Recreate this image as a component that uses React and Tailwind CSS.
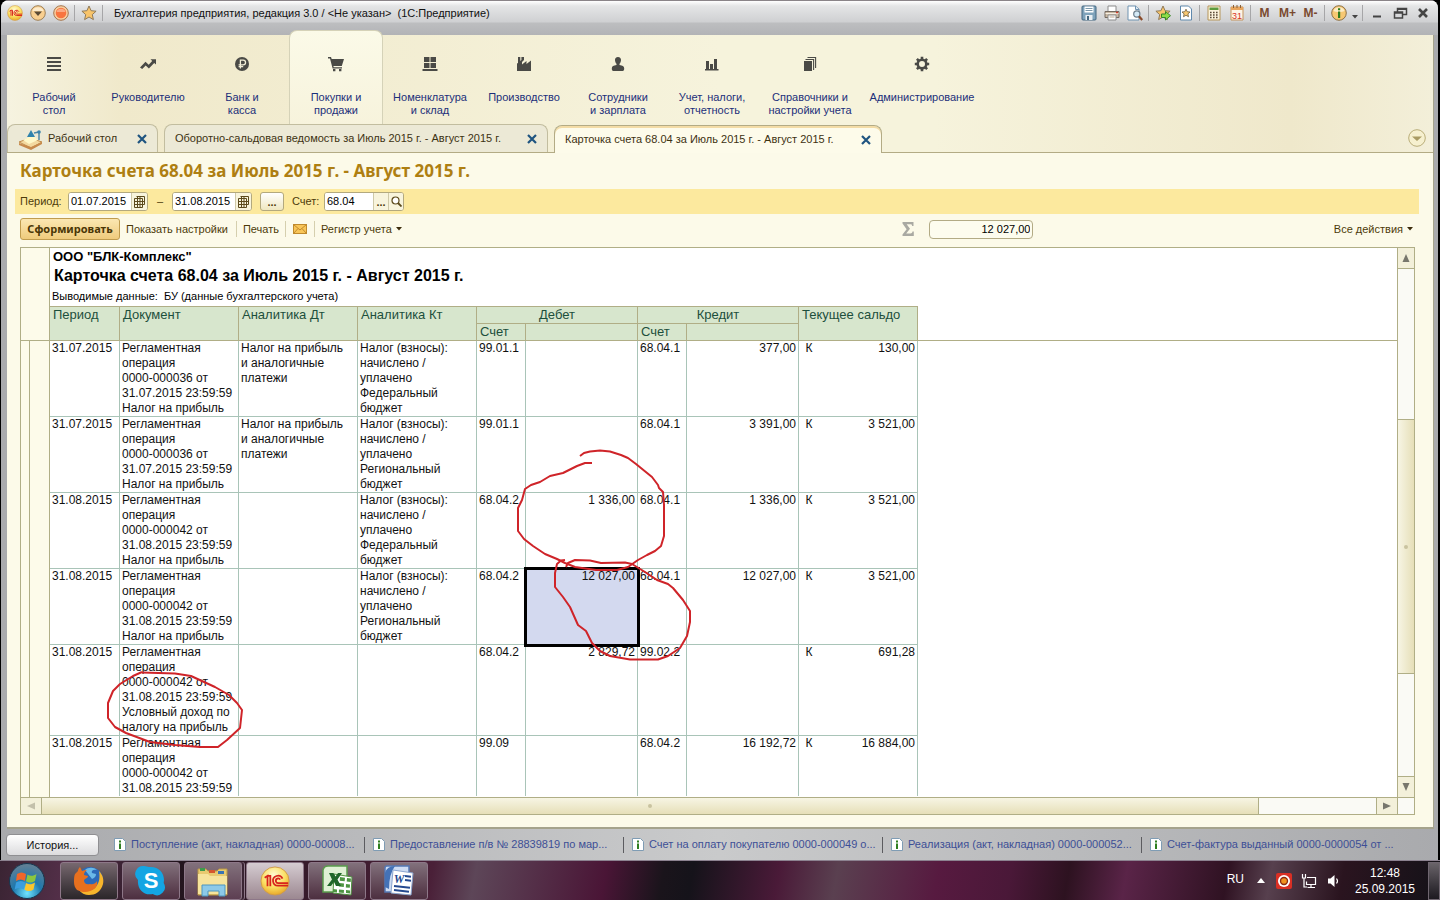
import React, { useState } from 'react';

const sections = [
  { icon: 'desk', lines: ['Рабочий', 'стол'], width: 'w-[94px]' },
  { icon: 'trend', lines: ['Руководителю'], width: 'w-[94px]' },
  { icon: 'ruble', lines: ['Банк и', 'касса'], width: 'w-[94px]' },
  { icon: 'cart', lines: ['Покупки и', 'продажи'], width: 'w-[94px]', active: true },
  { icon: 'stock', lines: ['Номенклатура', 'и склад'], width: 'w-[94px]' },
  { icon: 'factory', lines: ['Производство'], width: 'w-[94px]' },
  { icon: 'person', lines: ['Сотрудники', 'и зарплата'], width: 'w-[94px]' },
  { icon: 'bars', lines: ['Учет, налоги,', 'отчетность'], width: 'w-[94px]' },
  { icon: 'books', lines: ['Справочники и', 'настройки учета'], width: 'w-[102px]' },
  { icon: 'gear', lines: ['Администрирование'], width: 'w-[122px]' },
];

const debitTax = ['Налог на прибыль', 'и аналогичные', 'платежи'];
const federal = ['Налог (взносы):', 'начислено /', 'уплачено', 'Федеральный', 'бюджет'];
const regional = ['Налог (взносы):', 'начислено /', 'уплачено', 'Региональный', 'бюджет'];
const docJuly = ['Регламентная', 'операция', '0000-000036 от', '31.07.2015 23:59:59', 'Налог на прибыль'];
const docAugust = ['Регламентная', 'операция', '0000-000042 от', '31.08.2015 23:59:59'];

const rows = [
  { date: '31.07.2015', doc: docJuly, dt: debitTax, kt: federal, dAcc: '99.01.1', dSum: '', kAcc: '68.04.1', kSum: '377,00', rest: '130,00' },
  { date: '31.07.2015', doc: docJuly, dt: debitTax, kt: regional, dAcc: '99.01.1', dSum: '', kAcc: '68.04.1', kSum: '3 391,00', rest: '3 521,00' },
  { date: '31.08.2015', doc: [...docAugust, 'Налог на прибыль'], dt: [], kt: federal, dAcc: '68.04.2', dSum: '1 336,00', kAcc: '68.04.1', kSum: '1 336,00', rest: '3 521,00' },
  { date: '31.08.2015', doc: [...docAugust, 'Налог на прибыль'], dt: [], kt: regional, dAcc: '68.04.2', dSum: '12 027,00', kAcc: '68.04.1', kSum: '12 027,00', rest: '3 521,00' },
  { date: '31.08.2015', doc: [...docAugust, 'Условный доход по', 'налогу на прибыль'], dt: [], kt: [], dAcc: '68.04.2', dSum: '2 829,72', kAcc: '99.02.2', kSum: '', rest: '691,28' },
  { date: '31.08.2015', doc: docAugust, dt: [], kt: [], dAcc: '99.09', dSum: '', kAcc: '68.04.2', kSum: '16 192,72', rest: '16 884,00' },
];

const historyItems = [
  'Поступление (акт, накладная) 0000-00008...',
  'Предоставление п/в № 28839819 по мар...',
  'Счет на оплату покупателю 0000-000049 о...',
  'Реализация (акт, накладная) 0000-000052...',
  'Счет-фактура выданный 0000-0000054 от ...',
];

const SectionIcon = ({ name }) => (
  <svg width="16" height="16" viewBox="0 0 16 16" fill="#4a4a46" aria-hidden="true">
    {name === 'desk' && <path d="M1 1h14v2H1zM1 5h14v2H1zM1 9h14v2H1zM1 13h14v2H1z" />}
    {name === 'trend' && (
      <path d="M0 11.5 5.5 5.8l3.2 3L12.2 5 10.5 3.2H16v5.4l-1.8-1.7-5.3 5.6-3.2-3L2.2 13z" />
    )}
    {name === 'ruble' && (
      <>
        <circle cx="8" cy="8" r="7" />
        <path d="M6.4 12.5V4.2h2.8a2.3 2.3 0 0 1 0 4.7H4.6M4.6 10.7h4.6" fill="none" stroke="#f3efd8" strokeWidth="1.3" />
      </>
    )}
    {name === 'cart' && (
      <path d="M0 1h3l.7 2H16l-2.2 7H5.4l.3 1.2H14v1.3H4.6L2 2.4H0zM5 13h2.4v2.2H5zM11 13h2.4v2.2H11z" />
    )}
    {name === 'stock' && <path d="M2 1h5.5v5H2zM8.5 1H14v5H8.5zM2 7h5.500v5H2zM8.5 7H14v5H8.5zM.5 13h15v2H.5z" />}
    {name === 'factory' && <path d="M1 15V8l.5-1H2V1h2.300v4L5.400 4V1H8v3L6 6v2.500L10.500 5v3L15 4.500V15z" />}
    {name === 'person' && (
      <path d="M8 1c2 0 3.200 1.300 3 3.300-.1 1.600-.7 2.800-1.500 3.500v1.200c3 .4 4.700 1.300 4.700 3.300 0 1.700-.4 2.700-1.500 2.700H3.300c-1.100 0-1.500-1-1.500-2.700 0-2 1.700-2.900 4.700-3.300V7.800C5.700 7.100 5.100 5.900 5 4.300 4.800 2.300 6 1 8 1z" />
    )}
    {name === 'bars' && <path d="M2 5h3v8h1V8h3v5h1V3h3v10h1.500v1.500H1V13h1z" />}
    {name === 'books' && (
      <>
        <path d="M2 5h8v10H2z" />
        <path d="M3.500 3.500H11.600V14M5.500 1.500H13.600V12" fill="none" stroke="#4a4a46" strokeWidth="1.100" />
      </>
    )}
    {name === 'gear' && (
      <>
        <circle cx="8" cy="8" r="4.300" fill="none" stroke="#4a4a46" strokeWidth="2.600" />
        <path d="M8 .8v2.800M8 12.400v2.800M.8 8h2.800M12.400 8h2.800M2.900 2.900l2 2M11.100 11.100l2 2M13.100 2.900l-2 2M4.900 11.100l-2 2" stroke="#4a4a46" strokeWidth="2.600" />
      </>
    )}
  </svg>
);

const Caret = ({ color = '#3c2c0c' }) => (
  <svg width="6" height="4" viewBox="0 0 6 4" aria-hidden="true">
    <path d="M0 0h6L3 3.500z" fill={color} />
  </svg>
);

const CloseIcon = () => (
  <svg width="10" height="10" viewBox="0 0 10 10" aria-hidden="true">
    <path d="M1 1l8 8M9 1l-8 8" stroke="#1f5480" strokeWidth="2.200" />
  </svg>
);

const OneCIcon = ({ size }) => (
  <svg width={size} height={size} viewBox="0 0 32 32" aria-hidden="true">
    <defs>
      <radialGradient id="oneC" cx="45%" cy="30%" r="70%">
        <stop offset="0" stopColor="#fffbd6" />
        <stop offset="0.600" stopColor="#fbdf62" />
        <stop offset="1" stopColor="#e9a92a" />
      </radialGradient>
    </defs>
    <circle cx="16" cy="16" r="15" fill="url(#oneC)" stroke="#cf9a4a" />
    <path d="M5 12.500 8 10.500v11M11 21.500v-11h-3M24 13.500a5.300 5.300 0 1 0-4.500 7.500H30M21.500 14.500a2.500 2.500 0 1 0-2 3.800H30" fill="none" stroke="#d8231c" strokeWidth="1.900" />
  </svg>
);

const StarShape = ({ fill = '#f8c46a', stroke = '#8f7a58' }) => (
  <path d="M8 1l2.100 4.700 5 .5-3.800 3.400 1.100 5L8 12l-4.400 2.600 1.100-5L.9 6.200l5-.5z" fill={fill} stroke={stroke} strokeLinejoin="round" />
);

const ToolIcon = ({ name }) => (
  <svg width="16" height="16" viewBox="0 0 16 16" aria-hidden="true">
    {name === 'save' && (
      <>
        <rect x="1" y="1" width="14" height="14" rx="1" fill="#7fa3bb" stroke="#436780" />
        <path d="M3.500 1.500h9v6h-9z" fill="#fff" />
        <path d="M4.500 3.500h7M4.500 5.500h7" stroke="#7b98aa" />
        <path d="M4.500 10h7v5h-7z" fill="#e9eff3" />
        <path d="M6 11h2v4H6z" fill="#44687f" />
      </>
    )}
    {name === 'print' && (
      <>
        <path d="M4 1h8v6H4z" fill="#fff" stroke="#8c8c8c" />
        <path d="M1 6.500h14v6H1z" fill="#c9b9a4" stroke="#756a60" />
        <path d="M1.500 8.500h13" stroke="#f6efe4" />
        <path d="M4 10h8v5H4z" fill="#fff" stroke="#8c8c8c" />
        <path d="M5.500 12h5" stroke="#b9a58e" />
        <path d="M12 7.500h2" stroke="#d13b2b" strokeWidth="1.500" />
      </>
    )}
    {name === 'preview' && (
      <>
        <path d="M1 1h7.500L12 4v11H1z" fill="#fff" stroke="#6f93b1" />
        <path d="M8.500 1v3.500H12" fill="#dbe8f2" stroke="#6f93b1" />
        <circle cx="9.800" cy="9" r="3.100" fill="#d4e9f6" stroke="#6d7f8d" strokeWidth="1.200" />
        <path d="M12 11.300l3.200 3.700" stroke="#8a4a2a" strokeWidth="2.200" />
      </>
    )}
    {name === 'star' && <StarShape />}
    {name === 'starAdd' && (
      <>
        <StarShape />
        <path d="M6.500 9h4V6.500l5 4.200-5 4.300v-2.500h-4z" fill="#8fdc46" stroke="#37852a" />
      </>
    )}
    {name === 'starDoc' && (
      <>
        <path d="M2.500 1h8l3 3v11h-11z" fill="#fff" stroke="#5f89ad" />
        <path d="M8 4.200l1.200 2.500 2.800.3-2.100 1.900.6 2.800L8 10.300l-2.500 1.400.6-2.800L4 7l2.800-.3z" fill="#f8c872" stroke="#6d5c3c" strokeWidth=".8" />
      </>
    )}
    {name === 'calc' && (
      <>
        <path d="M2 1h12v14H2z" fill="#fbf3dc" stroke="#b5955b" />
        <path d="M3.500 2.500h9v2.500h-9z" fill="#5d9b3c" />
        <path d="M4 7.500h8M4 10h8M4 12.500h8" stroke="#5a4a36" strokeWidth="1.400" strokeDasharray="1.600 1.400" />
      </>
    )}
    {name === 'calendar' && (
      <>
        <path d="M2 2h12v13H2z" fill="#fdf5e6" stroke="#c5935d" />
        <path d="M2 2h12v3H2z" fill="#e9a55c" />
        <path d="M4.500 0v3M8 0v3M11.500 0v3" stroke="#8a6036" />
        <text x="8" y="13.500" fontSize="9" textAnchor="middle" fill="#d9341d" fontFamily="Liberation Sans, sans-serif">31</text>
      </>
    )}
    {name === 'info' && (
      <>
        <circle cx="8" cy="8" r="7.300" fill="#f7c873" stroke="#8e7248" />
        <path d="M2.500 6a5.700 5 0 0 1 11 0c-3 1.500-8 1.500-11 0z" fill="#fdecc6" />
        <path d="M7 6.500h2.200V13H7zM7 3.300h2.200v2H7z" fill="#2f7c1c" />
      </>
    )}
    {name === 'minimize' && <path d="M4 10.500h8v2H4z" fill="#444" />}
    {name === 'restore' && (
      <path d="M5.500 7V3.500h9v6H11M2.500 7h8v6h-8zM2.500 8h8M5.500 4.300h9" fill="none" stroke="#444" strokeWidth="1.500" />
    )}
    {name === 'close' && <path d="M4 4l8 8M12 4l-8 8" stroke="#444" strokeWidth="2.600" />}
  </svg>
);

const ToolButton = ({ name, label }) => (
  <button type="button" aria-label={label} className="w-[23px] h-5 flex items-center justify-center">
    <ToolIcon name={name} />
  </button>
);

const BarLine = () => <span className="w-px h-4 mx-[2px] bg-[#a6a6a8]"></span>;

const TitleBar = () => (
  <header className="h-[35px] border-t border-[#8a8488] pl-[2px] pr-1 bg-[linear-gradient(to_bottom,#ffffff_0,#e4e5e6_5px,#cfd0d2_21px,#bdbec0_22px,#b2b3b6_34px)]">
    <div className="flex items-center h-6 text-[11px] text-[#111]">
      <button type="button" aria-label="Меню" className="w-[23px] h-5 flex items-center justify-center">
        <OneCIcon size={16} />
      </button>
      <button type="button" aria-label="Список" className="w-[23px] h-5 flex items-center justify-center">
        <svg width="16" height="16" viewBox="0 0 16 16" aria-hidden="true">
          <circle cx="8" cy="8" r="7.300" fill="#f9cf90" stroke="#9e8058" />
          <path d="M2.500 6a5.700 5 0 0 1 11 0z" fill="#fdebcb" />
          <path d="M4 6.500h8L8 11z" fill="#5b4a35" />
        </svg>
      </button>
      <button type="button" aria-label="Запись" className="w-[23px] h-5 flex items-center justify-center">
        <svg width="16" height="16" viewBox="0 0 16 16" aria-hidden="true">
          <circle cx="8" cy="8" r="7.300" fill="#f9cfa0" stroke="#a5754d" />
          <circle cx="8" cy="8" r="5.300" fill="#f8743f" />
          <path d="M3.500 7a4.600 4.200 0 0 1 9 0z" fill="#fba983" />
        </svg>
      </button>
      <BarLine />
      <ToolButton name="star" label="Избранное" />
      <BarLine />
      <h1 className="ml-[9px] whitespace-pre truncate">Бухгалтерия предприятия, редакция 3.0 / &lt;Не указан&gt;  (1С:Предприятие)</h1>
      <div className="ml-auto flex items-center">
        <ToolButton name="save" label="Сохранить" />
        <ToolButton name="print" label="Печать документа" />
        <ToolButton name="preview" label="Просмотр" />
        <BarLine />
        <ToolButton name="starAdd" label="Добавить в избранное" />
        <ToolButton name="starDoc" label="Ссылки" />
        <BarLine />
        <ToolButton name="calc" label="Калькулятор" />
        <ToolButton name="calendar" label="Календарь" />
        <BarLine />
        <button type="button" className="w-[23px] text-xs font-bold text-[#7a4a30]">M</button>
        <button type="button" className="w-[23px] text-xs font-bold text-[#7a4a30]">M+</button>
        <button type="button" className="w-[23px] text-xs font-bold text-[#7a4a30]">M-</button>
        <BarLine />
        <ToolButton name="info" label="Справка" />
        <button type="button" aria-label="Еще" className="w-[10px] h-5 flex items-end justify-center pb-1">
          <Caret color="#444" />
        </button>
        <BarLine />
        <ToolButton name="minimize" label="Свернуть" />
        <ToolButton name="restore" label="Развернуть" />
        <ToolButton name="close" label="Закрыть" />
      </div>
    </div>
  </header>
);

const SectionNav = () => (
  <nav className="flex h-[95px] -mt-[5px]">
    {sections.map((s) => (
      <a
        key={s.icon}
        href="#"
        className={`${s.width} flex flex-col items-center pt-[25px] text-[11px] leading-[13px] text-[#1c2f7a] text-center ${
          s.active ? 'rounded-t-lg border-t border-x border-[#d5d2b8] bg-linear-to-b from-[#fbfae8] to-[#f7f3dc]' : 'border-t border-transparent'
        }`}
      >
        <SectionIcon name={s.icon} />
        <span className="mt-[19px] whitespace-nowrap">
          {s.lines.map((line) => (
            <span key={line} className="block">{line}</span>
          ))}
        </span>
      </a>
    ))}
  </nav>
);

const PageTabs = () => (
  <div className="flex items-end gap-[6px] border-b border-[#b3ab85] h-7">
    <div className="flex items-center w-[151px] h-7 pl-[10px] pr-[10px] rounded-t-lg border border-b-0 border-[#c2bd9f] bg-[#ece9d6]">
      <svg width="26" height="22" viewBox="0 0 26 22" aria-hidden="true">
        <path d="M1 14l11-4 12 4-11 6z" fill="#f3d9a0" stroke="#c08b4b" />
        <path d="M1 15v2l12 5 11-6v-2l-11 5z" fill="#c78a4c" />
        <path d="M5 12l10-5 5 5-9 4z" fill="#fff8c8" />
        <path d="M13 2l4 7h-8z" fill="#2f83ad" />
        <path d="M16 5l5-1v8" fill="none" stroke="#4c87a5" strokeWidth="1.500" />
        <circle cx="21" cy="4" r="1.800" fill="#3b85ad" />
      </svg>
      <button type="button" className="ml-1 text-[11px] text-[#3d3212]">Рабочий стол</button>
      <button type="button" aria-label="Закрыть вкладку" className="ml-auto"><CloseIcon /></button>
    </div>
    <div className="flex items-center w-[384px] h-7 px-[10px] rounded-t-lg border border-b-0 border-[#c2bd9f] bg-[#ece9d6]">
      <button type="button" className="whitespace-nowrap text-[11px] text-[#3d3212]">
        Оборотно-сальдовая ведомость за Июль 2015 г. - Август 2015 г.
      </button>
      <button type="button" aria-label="Закрыть вкладку" className="ml-auto"><CloseIcon /></button>
    </div>
    <div className="flex items-center w-[328px] h-7 -mb-px px-[10px] rounded-t-lg border border-b-0 border-[#b3ab85] bg-[#fdfbea] shadow-[inset_0_2px_0_#f3dca6]">
      <button type="button" className="whitespace-nowrap text-[11px] text-[#3d3212]">
        Карточка счета 68.04 за Июль 2015 г. - Август 2015 г.
      </button>
      <button type="button" aria-label="Закрыть вкладку" className="ml-auto"><CloseIcon /></button>
    </div>
    <button type="button" aria-label="Список вкладок" className="ml-auto mr-[7px] mb-[5px]">
      <svg width="18" height="18" viewBox="0 0 18 18" aria-hidden="true">
        <circle cx="9" cy="9" r="8.300" fill="#f6f0cf" stroke="#b9ad78" />
        <path d="M4 7.500h10L9 12z" fill="#a99b63" />
      </svg>
    </button>
  </div>
);

const CalendarGlyph = () => (
  <svg width="11" height="12" viewBox="0 0 11 12" aria-hidden="true">
    <path d="M2.500.5h8v8h-2M.5 2.500h8v9h-8zM.5 5.500h10M.5 8.500h8M3.500.5v11M6 .5v11" fill="none" stroke="#5c4a1c" />
  </svg>
);

const DateField = ({ label, value }) => (
  <span className="flex w-[80px] h-[19px] rounded-[3px] border border-[#b3a97e] bg-white overflow-hidden">
    <input aria-label={label} defaultValue={value} className="min-w-0 flex-1 pl-[2px] text-[11px] text-black bg-white" />
    <button type="button" aria-label="Выбрать дату" className="w-4 flex items-center justify-center border-l border-[#cfc9a8] bg-[#f8f4dc]">
      <CalendarGlyph />
    </button>
  </span>
);

const ToolLine = () => <span className="w-px h-4 mx-[6px] bg-[#d5cfae]"></span>;

const Filters = () => (
  <form className="ml-2 mr-[14px] h-[25px] pl-[5px] flex items-center bg-[#fce99e] text-[11px] text-[#4d3b0a]" onSubmit={(e) => e.preventDefault()}>
    <span className="w-12">Период:</span>
    <DateField label="Начало периода" value="01.07.2015" />
    <span className="w-6 text-center">–</span>
    <DateField label="Конец периода" value="31.08.2015" />
    <button type="button" className="ml-2 w-6 h-[19px] rounded-[3px] border border-[#b3a97e] bg-linear-to-b from-white to-[#efe7c0] font-bold leading-4">...</button>
    <label htmlFor="account" className="ml-2 w-8">Счет:</label>
    <span className="flex w-[80px] h-[19px] rounded-[3px] border border-[#b3a97e] bg-white overflow-hidden">
      <input id="account" defaultValue="68.04" className="min-w-0 flex-1 pl-[2px] text-[11px] text-black bg-white" />
      <button type="button" className="w-[15px] border-l border-[#cfc9a8] bg-[#f8f4dc] font-bold leading-4">...</button>
      <button type="button" aria-label="Открыть счет" className="w-[15px] flex items-center justify-center border-l border-[#cfc9a8] bg-[#f8f4dc]">
        <svg width="11" height="11" viewBox="0 0 11 11" aria-hidden="true">
          <circle cx="4.500" cy="4.500" r="3.500" fill="#fff" stroke="#5c4a1c" strokeWidth="1.200" />
          <path d="M7 7l3.500 3.500" stroke="#5c4a1c" strokeWidth="1.800" />
        </svg>
      </button>
    </span>
  </form>
);

const Toolbar = () => (
  <div className="mt-1 ml-[13px] mr-5 h-[22px] flex items-center text-[11px] text-[#4d3b0a] whitespace-nowrap">
    <button type="button" className="w-[100px] h-[22px] rounded-[3px] border border-[#c09c4e] bg-linear-to-b from-[#fbe7b2] to-[#efcb7c] font-['Noto_Sans',sans-serif] text-[11px] leading-5 font-bold text-[#4a3606]">
      Сформировать
    </button>
    <button type="button" className="ml-[6px] mr-[2px]">Показать настройки</button>
    <ToolLine />
    <button type="button">Печать</button>
    <ToolLine />
    <button type="button" aria-label="Отправить по почте" className="px-px">
      <svg width="14" height="10" viewBox="0 0 14 10" aria-hidden="true">
        <rect x=".5" y=".5" width="13" height="9" fill="#f9c659" stroke="#c08a2c" />
        <path d="M.5.5L7 6l6.500-5.500M.5 9.500L5 4.500M13.500 9.500L9 4.500" fill="none" stroke="#c08a2c" />
      </svg>
    </button>
    <ToolLine />
    <button type="button" className="flex items-center gap-1">Регистр учета <Caret /></button>
    <span className="flex-[5]"></span>
    <svg width="12" height="14" viewBox="0 0 12 14" aria-hidden="true">
      <path d="M.5 0h11v4h-1.300c-.2-1.300-.7-1.700-2-1.700H4.700L8 6.700l-3.800 4.700h4.300c1.200 0 1.700-.5 2-1.900h1.300V14H.5v-1.600L4.600 7.200.5 1.600z" fill="#a9a9a2" />
    </svg>
    <input aria-label="Сумма" readOnly value="12 027,00" className="ml-[15px] w-[104px] h-[19px] rounded-[4px] border border-[#b3ab85] bg-[#fdfcee] pr-[2px] text-right text-[11px] text-black" />
    <span className="flex-[3]"></span>
    <button type="button" className="flex items-center gap-1">Все действия <Caret /></button>
  </div>
);

const head = 'bg-[#d7e6cd] border-r border-b border-[#b0ae86] px-[3px] align-top font-normal text-left';
const cell = 'border-r border-b border-[#a9c4b8] px-[2px] align-top';

const Lines = ({ items }) => items.map((line) => <div key={line} className="whitespace-nowrap">{line}</div>);

const ReportTable = () => {
  const [selected, setSelected] = useState(3);

  return (
    <table className="w-full table-fixed border-separate border-spacing-0 text-xs leading-[15px] text-[#111]">
      <colgroup>
        <col className="w-[70px]" />
        <col className="w-[119px]" />
        <col className="w-[119px]" />
        <col className="w-[119px]" />
        <col className="w-[49px]" />
        <col className="w-[112px]" />
        <col className="w-[49px]" />
        <col className="w-[112px]" />
        <col className="w-[20px]" />
        <col className="w-[99px]" />
        <col />
      </colgroup>
      <thead className="text-[13px] leading-4 text-[#1d4f3c]">
        <tr>
          <th rowSpan="2" className={`${head} border-t`}>Период</th>
          <th rowSpan="2" className={`${head} border-t`}>Документ</th>
          <th rowSpan="2" className={`${head} border-t`}>Аналитика Дт</th>
          <th rowSpan="2" className={`${head} border-t`}>Аналитика Кт</th>
          <th colSpan="2" className={`${head} border-t`}><div className="text-center">Дебет</div></th>
          <th colSpan="2" className={`${head} border-t`}><div className="text-center">Кредит</div></th>
          <th colSpan="2" rowSpan="2" className={`${head} border-t whitespace-nowrap`}>Текущее сальдо</th>
          <td rowSpan="2" className="border-b border-[#b0ae86]"></td>
        </tr>
        <tr>
          <th className={head}>Счет</th>
          <th className={head}></th>
          <th className={head}>Счет</th>
          <th className={head}></th>
        </tr>
      </thead>
      <tbody>
        {rows.map((row, idx) => (
          <tr key={idx} className="last:[&>td]:border-b-0">
            <td className={cell}>{row.date}</td>
            <td className={cell}><Lines items={row.doc} /></td>
            <td className={cell}><Lines items={row.dt} /></td>
            <td className={cell}><Lines items={row.kt} /></td>
            <td className={cell}>{row.dAcc}</td>
            <td
              className={`${cell} text-right ${selected === idx ? 'bg-[#d3d9ef] outline-3 -outline-offset-1 outline-black' : ''}`}
              onClick={() => setSelected(idx)}
            >
              {row.dSum}
            </td>
            <td className={cell}>{row.kAcc}</td>
            <td className={`${cell} text-right`}>{row.kSum}</td>
            <td className="border-b border-[#a9c4b8] align-top text-center">К</td>
            <td className={`${cell} text-right`}>{row.rest}</td>
            <td></td>
          </tr>
        ))}
      </tbody>
    </table>
  );
};

// Red pen marks drawn over the sheet
const PenMarks = () => (
  <svg className="absolute left-0 top-0 pointer-events-none" width="1348" height="549" viewBox="50 248 1348 549" fill="none" stroke="#cf2429" strokeWidth="2" strokeLinejoin="round" aria-hidden="true">
    <path d="M580 456L584 453L590 451.500L600 450.500L610 451.500L621 455L628 458L636 464L652 477L658 485L659 488L663 492L664 505V536L661 546L655 551L647 555L638 560L628 567L617 570H596L575 567L565 563L557 559L545 554L533 546L524 539L518 531V508L522 500L525 489L531 485L540 482L550 476L563 473L577 466L585 463H592" />
    <path d="M565 560L561 560.500L557 564L555 573V587L563 597L570 607L574 616L578 625L586 631L592 643L600 651L610 656L630 659.500H658L668 656L680 648L687 636L690 622V611L683 600L673 588L668 584L657 580L645 572L632 564L625 562.500L601 563L590 560.500L575 560L568 563L566 567" />
    <path d="M142 672L133 676L120 684L113 691L108 703V718L115 727L126 733L150 742L175 745L200 747H218L227 740L240 728L242 710L237 703L229 695L215 687L191 676L175 673.500L142 672.500" />
  </svg>
);

const ScrollArrow = ({ d, dim }) => (
  <svg width="8" height="8" viewBox="0 0 8 8" aria-hidden="true">
    <path d={d} fill={dim ? '#c3c0ab' : '#77766c'} />
  </svg>
);

const Sheet = () => (
  <div className="mt-[7px] ml-[13px] mr-[18px] mb-3 flex-1 min-h-0 flex flex-col border border-[#b0ae86] bg-white font-['Liberation_Sans',Arial,sans-serif]">
    <div className="flex flex-1 min-h-0">
      <div className="w-[29px] shrink-0 flex flex-col border-r border-[#b0ae86] bg-[#fdfbea]">
        <div className="h-[93px] border-b border-[#b0ae86]"></div>
        <div className="flex-1 w-[9px] border-r border-[#b0ae86]"></div>
      </div>
      <div className="relative flex-1 min-w-0 overflow-hidden">
        <div className="h-[58px] text-black whitespace-nowrap">
          <p className="pl-[3px] text-[13px] leading-[17px] font-bold">ООО "БЛК-Комплекс"</p>
          <p className="pl-1 text-base leading-[21px] font-bold">Карточка счета 68.04 за Июль 2015 г. - Август 2015 г.</p>
          <p className="pl-[2px] text-[11px] leading-5 whitespace-pre">Выводимые данные:  БУ (данные бухгалтерского учета)</p>
        </div>
        <ReportTable />
        <PenMarks />
      </div>
      <div className="w-[17px] shrink-0 flex flex-col border-l border-[#b0ae86] bg-[#fafaf5]">
        <button type="button" aria-label="Вверх" className="h-[21px] flex items-center justify-center border-b border-[#b0ae86] bg-[#f3f0da]">
          <ScrollArrow d="M4 0l3.500 8h-7z" />
        </button>
        <div className="flex-[151]"></div>
        <div className="flex-[254] flex items-center justify-center border-y border-[#b0ae86] bg-linear-to-r from-[#f7f5e4] to-[#e6dfb8]">
          <span className="w-1 h-1 rounded-full bg-[#c9c3a0]"></span>
        </div>
        <div className="flex-[102]"></div>
        <button type="button" aria-label="Вниз" className="h-[21px] flex items-center justify-center border-t border-[#b0ae86] bg-[#f3f0da]">
          <ScrollArrow d="M4 8l3.500-8h-7z" />
        </button>
      </div>
    </div>
    <div className="h-[17px] flex border-t border-[#b0ae86] bg-[#fafaf5]">
      <button type="button" aria-label="Влево" className="w-[21px] flex items-center justify-center border-r border-[#b0ae86] bg-[#f3f0da]">
        <ScrollArrow d="M0 4l8-3.500v7z" dim />
      </button>
      <div className="flex-[1218] flex items-center justify-center border-r border-[#b0ae86] bg-linear-to-b from-[#f7f5e4] to-[#e6dfb8]">
        <span className="w-1 h-1 rounded-full bg-[#c9c3a0]"></span>
      </div>
      <div className="flex-[117]"></div>
      <button type="button" aria-label="Вправо" className="w-[22px] flex items-center justify-center border-x border-[#b0ae86] bg-[#f3f0da]">
        <ScrollArrow d="M8 4l-8-3.500v7z" />
      </button>
      <div className="w-4"></div>
    </div>
  </div>
);

const HistoryBar = () => (
  <footer className="h-[31px] flex items-center pl-[5px] overflow-hidden">
    <button type="button" className="w-[93px] h-[22px] shrink-0 rounded-[4px] border border-[#8f8f92] bg-linear-to-b from-white to-[#dcdcde] text-[11px] leading-5 text-[#111]">
      История...
    </button>
    <div className="flex ml-[6px] min-w-0">
      {historyItems.map((item, idx) => (
        <a
          key={item}
          href="#"
          className={`w-[259px] h-4 flex items-center pl-2 border-l text-[11px] text-[#3d4f96] whitespace-nowrap ${idx === 0 ? 'border-transparent' : 'border-[#5c5c60]'}`}
        >
          <svg width="12" height="13" viewBox="0 0 12 13" className="mr-[5px] shrink-0" aria-hidden="true">
            <path d="M.5.5h8l3 3v9H.5z" fill="#fff" stroke="#7f9cb4" />
            <path d="M5 5.500h2V11H5zM5 2.500h2v2H5z" fill="#2f7f1f" />
          </svg>
          {item}
        </a>
      ))}
    </div>
  </footer>
);

const AppIcon = ({ name }) => (
  <svg width="32" height="32" viewBox="0 0 32 32" aria-hidden="true">
    {name === 'Firefox' && (
      <>
        <circle cx="17" cy="15" r="13" fill="#2c69b8" />
        <path d="M12 5c3-3 9-3 12 0-4-1-6 1-5 3l4 1c0 3-2 4-4 5z" fill="#69b8e8" />
        <path d="M26 6c4 4 5 9 4 13-2 8-8 11-14 11-4 0-8-2-10-5 12 4 23-3 20-19z" fill="#f7b52c" />
        <path d="M2 9l3-3c0-2 1-3 2-4l2 4c2-1 4-1 5-1-2 1-3 3-3 5l4 1c0 2-2 2-4 4 0 4 3 5 6 4 3 1 6-1 7-3 1 6-3 9-7 10-4 2-9 1-13-1C2 23 1 20 1 17c0-3 0-6 1-8z" fill="#e8701e" />
      </>
    )}
    {name === 'Skype' && (
      <>
        <path d="M9 1c2 0 4 1 5 1 9-1 15 5 15 13l-.3 3a8 8 0 0 1-11 11C9 31 2 24 3 15a8 8 0 0 1 6-14z" fill="#14a5e3" />
        <text x="16" y="23" textAnchor="middle" fontSize="22" fontWeight="bold" fill="#fff" fontFamily="Liberation Sans, sans-serif">S</text>
      </>
    )}
    {name === 'Проводник' && (
      <>
        <path d="M1 4h8l2 2h9l2-2h8v26H1z" fill="#e8ca70" stroke="#b99846" />
        <path d="M3 3h5v3H3z" fill="#3d9b4b" /><path d="M12 5h6v3h-6z" fill="#d6562e" /><path d="M21 6h6v3h-6z" fill="#3974b4" />
        <path d="M1 9h10l2 2h17v18H1z" fill="#f6e39c" />
        <path d="M5 31V20h23v11h-6v-5H11v5z" fill="#8cc9e8" stroke="#4c95bf" />
      </>
    )}
    {name === 'Excel' && (
      <>
        <path d="M2 5q1-4 5-4h19v26H2z" fill="#dff0d4" stroke="#5a9c4c" strokeWidth="1.500" />
        <path d="M13 9l18 3-1 18-18-2z" fill="#fff" stroke="#4f9440" />
        <path d="M19 12l5 .8-.3 3.500-5-.5zM26 13l4 .6-.3 3.300-4-.4zM18 18l5 .5-.2 3.500-5-.4zM25 19l4 .4-.2 3.400-4-.4zM12 24l4 .4v3l-4-.4zM18 24.500l5 .5-.2 3-5-.6zM25 25l4 .4v3l-4-.4z" fill="#4d9441" />
        <path d="M8 8h4.500l2 3.500L17 8h4l-4.500 6.500L20 21h-5l-2-4-3 4H6l5-6.500z" fill="#20662a" />
      </>
    )}
    {name === 'Word' && (
      <>
        <path d="M2 3q0-2 2-2h22v26H2z" fill="#cddcf3" stroke="#5478b5" strokeWidth="1.500" />
        <path d="M2 8q2-7 10-7-6 8-6 23l-4-2z" fill="#4472b7" />
        <path d="M10 5l20 3-2 22-20-2z" fill="#fff" stroke="#8ba5cf" />
        <path d="M22 11l6 .8M22 15l6 .8M11 21l16 1.700M11 25l15 1.700" stroke="#24498f" strokeWidth="2" />
        <text x="16" y="18" textAnchor="middle" fontSize="12" fontWeight="bold" fontStyle="italic" fill="#24498f" fontFamily="Liberation Serif, serif">W</text>
      </>
    )}
  </svg>
);

const taskButton = 'w-[58px] h-[38px] flex items-center justify-center rounded-[3px] border border-[#8d7788]';

const Taskbar = () => (
  <div className="h-10 flex items-center border-t border-[#8c8290] text-white bg-[linear-gradient(100deg,#3a2433_0%,#55304a_5%,#22141d_12%,#4a2038_30%,#5d4658_33%,#4a1536_42%,#1a141b_46%,#15131a_48%,#4a1a38_54%,#5a4050_58%,#571a40_65%,#4a1838_70%,#2d1220_74%,#5a2448_78%,#2f1222_85%,#57404e_88%,#2a141f_93%,#141218_100%)]">
    <button type="button" aria-label="Пуск" className="ml-2 mr-[14px]">
      <svg width="38" height="38" viewBox="0 0 38 38" aria-hidden="true">
        <defs>
          <radialGradient id="orb" cx="50%" cy="85%" r="80%">
            <stop offset="0" stopColor="#6fe4ff" />
            <stop offset="0.500" stopColor="#1f78ad" />
            <stop offset="1" stopColor="#5f7f95" />
          </radialGradient>
        </defs>
        <circle cx="19" cy="19" r="17.500" fill="url(#orb)" stroke="#16374f" />
        <path d="M9 12c3-2 6-2 9 0l-1 7c-3-2-6-2-9 0z" fill="#f0662a" />
        <path d="M19.500 12.500c3 2 6 1.500 9-.5l-1.500 7c-3 2-6 2-9 .3z" fill="#8cc63e" />
        <path d="M8 20.500c3-2 6-2 9 0l-1.300 7c-3-2-5.700-2-9 0z" fill="#3b9ede" />
        <path d="M18 21c3 2 6 1.500 9-.5l-1.500 7c-3 2-6 2-9 .3z" fill="#fcc62b" />
      </svg>
    </button>
    <div className="flex gap-1">
      <button type="button" aria-label="Firefox" className={`${taskButton} bg-linear-to-b from-[#77686f] to-[#2b262a]`}><AppIcon name="Firefox" /></button>
      <button type="button" aria-label="Skype" className={`${taskButton} bg-linear-to-b from-[#82717c] to-[#4d2f40]`}><AppIcon name="Skype" /></button>
      <button type="button" aria-label="Проводник" className={`${taskButton} bg-linear-to-b from-[#82717c] to-[#5d3f52] shadow-[2px_0_0_#3a2433,3px_0_0_#8d7788]`}><AppIcon name="Проводник" /></button>
      <button type="button" aria-label="1С:Предприятие" className={`${taskButton} bg-linear-to-b from-[#d5ccd1] to-[#9c8891]`}><OneCIcon size={30} /></button>
      <button type="button" aria-label="Excel" className={`${taskButton} bg-linear-to-b from-[#82717c] to-[#4d2f40]`}><AppIcon name="Excel" /></button>
      <button type="button" aria-label="Word" className={`${taskButton} bg-linear-to-b from-[#82717c] to-[#4d2f40]`}><AppIcon name="Word" /></button>
    </div>
    <div className="ml-auto flex items-center gap-[9px] text-xs leading-4">
      <button type="button" className="pb-1 mr-1">RU</button>
      <svg width="8" height="5" viewBox="0 0 8 5" aria-hidden="true"><path d="M0 5h8L4 0z" fill="#fff" /></svg>
      <svg width="16" height="16" viewBox="0 0 16 16" className="ml-[2px]" aria-hidden="true">
        <rect width="16" height="16" rx="2" fill="#d92f24" />
        <circle cx="8" cy="8" r="6" fill="#fff" /><circle cx="8" cy="8" r="4.200" fill="#8c2b12" /><circle cx="8" cy="8" r="2.800" fill="#f1921f" />
      </svg>
      <svg width="16" height="16" viewBox="0 0 16 16" fill="none" stroke="#fff" aria-hidden="true">
        <path d="M6 4.500h8.500v7H5.500v-3M10 11.500v3M6.500 14.500h7.500M1.500 1v4h3V1M3 5v9h3" strokeWidth="1.200" />
      </svg>
      <svg width="16" height="16" viewBox="0 0 16 16" aria-hidden="true">
        <path d="M2 5.500h2.500L8.500 2v12l-4-3.500H2z" fill="#fff" />
        <path d="M10.500 5.500q2 2.500 0 5" fill="none" stroke="#fff" strokeWidth="1.200" />
      </svg>
      <div className="w-[68px] text-center">
        <div>12:48</div>
        <div>25.09.2015</div>
      </div>
      <button type="button" aria-label="Показать рабочий стол" className="w-3 h-[38px] border border-[#6f6670] bg-linear-to-b from-[#6a646a] to-[#1d1a20]"></button>
    </div>
  </div>
);

const App = () => (
  <div className="h-screen min-h-[600px] flex flex-col bg-black font-['Liberation_Sans',Arial,sans-serif]">
    <div className="flex-1 min-h-0 flex flex-col ml-px mr-[2px] rounded-t-lg overflow-hidden bg-[linear-gradient(90deg,#a9aaad,#c9cacb_50%,#a9aaad)]">
      <TitleBar />
      <main className="flex-1 min-h-0 flex flex-col ml-[6px] mr-1 border-r border-b-2 border-[#a5a38c] bg-[#fcfae9]">
        <div className="bg-[linear-gradient(90deg,#f6f3e0,#f0e9cb_8%,#f6f3dc_50%,#f6f3dc_65%,#efe8cb_90%,#f3efd9)]">
          <SectionNav />
          <PageTabs />
        </div>
        <h2 className="pl-[13px] h-9 font-['Noto_Sans',sans-serif] text-[17px] leading-9 font-bold text-[#ae7f12]">
          Карточка счета 68.04 за Июль 2015 г. - Август 2015 г.
        </h2>
        <Filters />
        <Toolbar />
        <Sheet />
      </main>
      <HistoryBar />
    </div>
    <Taskbar />
  </div>
);

export default App;
